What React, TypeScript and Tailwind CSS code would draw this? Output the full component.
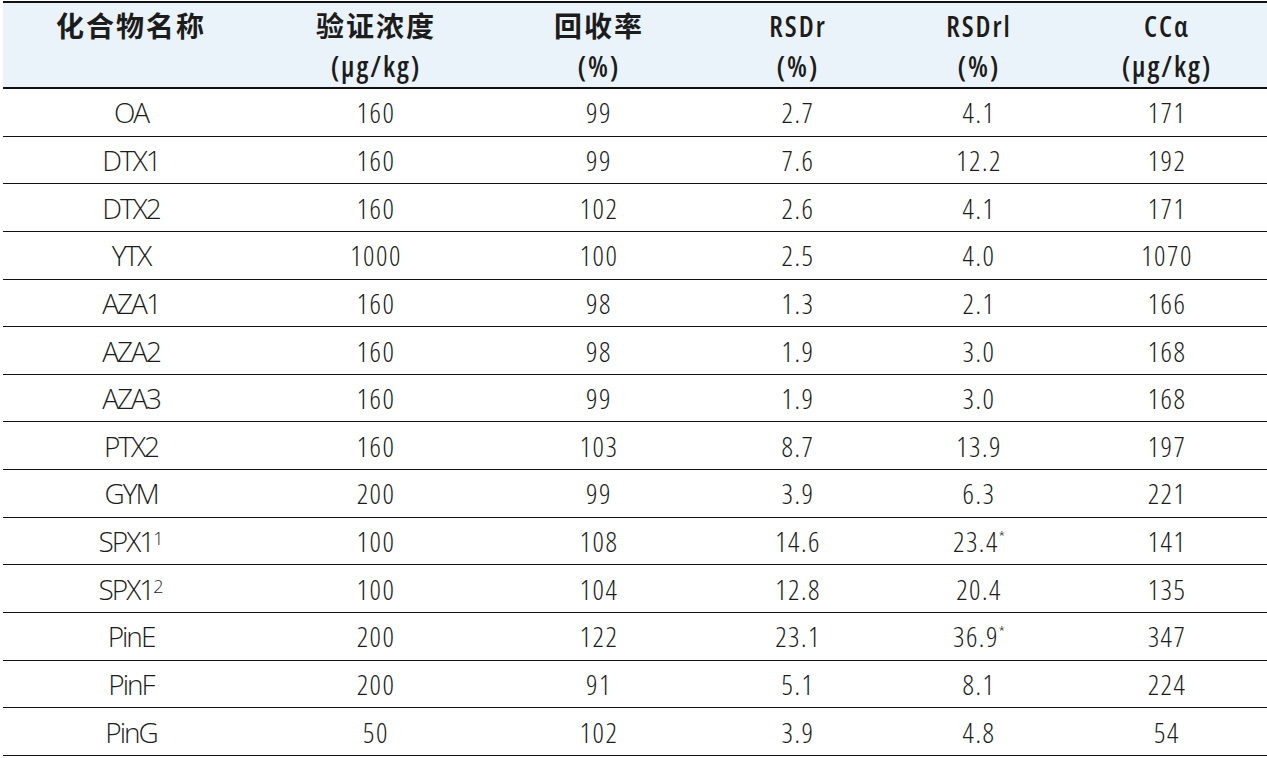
const rows: [string, string, string, string, string, string][] = [
  ['OA', '160', '99', '2.7', '4.1', '171'],
  ['DTX1', '160', '99', '7.6', '12.2', '192'],
  ['DTX2', '160', '102', '2.6', '4.1', '171'],
  ['YTX', '1000', '100', '2.5', '4.0', '1070'],
  ['AZA1', '160', '98', '1.3', '2.1', '166'],
  ['AZA2', '160', '98', '1.9', '3.0', '168'],
  ['AZA3', '160', '99', '1.9', '3.0', '168'],
  ['PTX2', '160', '103', '8.7', '13.9', '197'],
  ['GYM', '200', '99', '3.9', '6.3', '221'],
  ['SPX1¹', '100', '108', '14.6', '23.4*', '141'],
  ['SPX1²', '100', '104', '12.8', '20.4', '135'],
  ['PinE', '200', '122', '23.1', '36.9*', '347'],
  ['PinF', '200', '91', '5.1', '8.1', '224'],
  ['PinG', '50', '102', '3.9', '4.8', '54'],
];

const headers: [string, string][] = [
  ['化合物名称', ''],
  ['验证浓度', '(μg/kg)'],
  ['回收率', '(%)'],
  ['RSDr', '(%)'],
  ['RSDrl', '(%)'],
  ['CCα', '(μg/kg)'],
];

const widths = ['w-[256px]', 'w-[234px]', 'w-[212px]', 'w-[186px]', 'w-[176px]', 'w-[200px]'];

// splits trailing superscript marks so they can be drawn small and raised
function Cell({ text }: { text: string }) {
  const m = text.match(/^(.*?)([¹²*])$/);
  if (!m) return <>{text}</>;
  const mark = m[2] === '¹' ? '1' : m[2] === '²' ? '2' : '*';
  return (
    <>
      {m[1]}
      <span className={mark === '*' ? 'text-[17px] relative -top-[9px] tracking-normal' : 'text-[18px] relative -top-[7px] tracking-normal'}>
        {mark}
      </span>
    </>
  );
}

export default function App() {
  return (
    <div
      className="w-[1267px] h-[758px] bg-white pl-[3px] pt-px text-[#1c1c1c]"
      style={{ fontFamily: '"Open Sans", "Noto Sans CJK SC", sans-serif' }}
    >
      <table className="border-separate border-spacing-0 table-fixed w-[1264px]">
        <thead>
          <tr className="bg-[#eaf2fa]">
            {headers.map(([a, b], i) => (
              <th
                key={i}
                className={`${widths[i]} h-[88px] p-0 pt-[3px] font-semibold text-[28px] leading-[40px] tracking-[2px] align-top border-t-[2px] border-b-[2px] border-[#111] [font-stretch:75%]`}
              >
                <div>{a}</div>
                {b && <div>{b}</div>}
              </th>
            ))}
          </tr>
        </thead>
        <tbody>
          {rows.map((r, ri) => (
            <tr key={ri}>
              {r.map((c, ci) => (
                <td
                  key={ci}
                  className={`h-[47.65px] p-0 text-center text-[28px] font-light leading-none border-b-[1.5px] border-[#111] ${
                    ci === 0 ? 'tracking-[-2px]' : '[font-stretch:75%] tracking-[1.5px]'
                  }`}
                >
                  <Cell text={c} />
                </td>
              ))}
            </tr>
          ))}
        </tbody>
      </table>
    </div>
  );
}
